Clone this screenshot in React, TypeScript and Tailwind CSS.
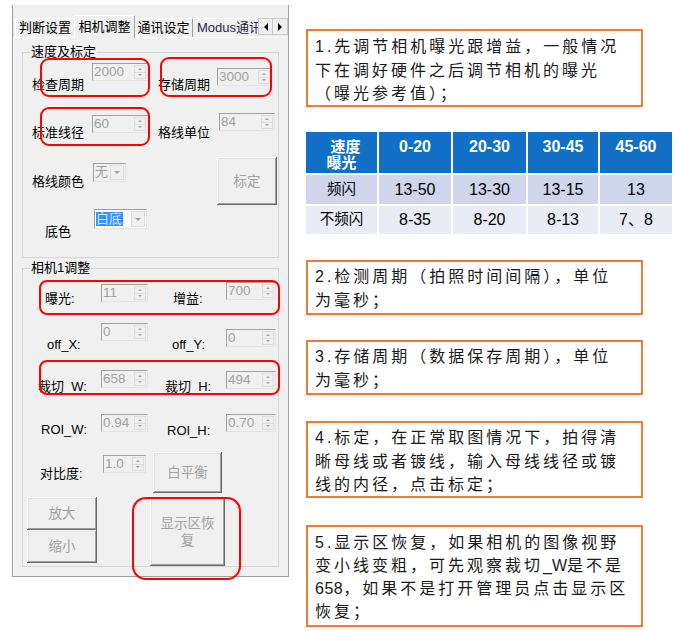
import React from "react";

const UI = "font-['Liberation_Sans','Noto_Sans_CJK_SC',sans-serif]";

const Tri = ({ up }: { up?: boolean }) =>
  up ? (
    <div className="h-0 w-0 border-x-[2px] border-b-[2px] border-x-transparent border-b-[#a0a0a0]" />
  ) : (
    <div className="h-0 w-0 border-x-[2px] border-t-[2px] border-x-transparent border-t-[#a0a0a0]" />
  );

const Spin = ({ v, c }: { v: string; c: string }) => (
  <div
    className={`flex h-[18px] shrink-0 border border-b-[#e3e3e3] border-l-[#a0a0a0] border-r-[#e3e3e3] border-t-[#a0a0a0] bg-[#f0f0f0] ${c}`}
  >
    <div className="flex-1 pl-[1px] text-[13.5px] leading-[16px] text-[#a0a0a0]">{v}</div>
    <div className="my-[1px] mr-[1px] flex w-[12px] flex-col">
      <div className="flex flex-1 items-center justify-center border border-[#dcdcdc]">
        <Tri up />
      </div>
      <div className="flex flex-1 items-center justify-center border border-t-0 border-[#dcdcdc]">
        <Tri />
      </div>
    </div>
  </div>
);

const Lbl = ({ t, c }: { t: string; c: string }) => (
  <div className={`shrink-0 whitespace-nowrap text-[13px] leading-[17px] text-black ${c}`}>{t}</div>
);

const Btn = ({ children, c }: { children: React.ReactNode; c: string }) => (
  <div
    className={`flex shrink-0 items-center justify-center bg-[#f0f0f0] text-center text-[13.5px] leading-[17px] text-[#a0a0a0] shadow-[inset_-1px_-1px_0_#696969,inset_1px_1px_0_#ffffff,inset_-2px_-2px_0_#a0a0a0,inset_2px_2px_0_#e3e3e3] ${c}`}
  >
    {children}
  </div>
);

const Note = ({ lines, c }: { lines: React.ReactNode[]; c: string }) => (
  <div
    className={`w-[337px] shrink-0 border-2 border-[#ed7d31] pl-[7px] text-[16px] leading-[23.5px] tracking-[3px] text-[#1a1a1a] ${c}`}
  >
    {lines.map((l, i) => (
      <div key={i} className="whitespace-nowrap">
        {l}
      </div>
    ))}
  </div>
);

const Red = ({ c }: { c: string }) => (
  <div className={`pointer-events-none absolute border-2 border-[#ff0000] ${c}`} />
);

export default function App() {
  return (
    <div className={`relative flex h-[631px] w-[676px] bg-white ${UI}`}>
      {/* left: dialog */}
      <div className="ml-[12px] mt-[5px] flex h-[572px] w-[277px] shrink-0 flex-col border-b border-l border-r border-dotted border-b-[#a0a0a0] border-l-[#9a9a9a] border-r-[#a0a0a0] border-solid bg-[#f0f0f0]">
        {/* tab strip */}
        <div className="flex h-[32px] items-end pl-[2px]">
          <div className="flex h-[19px] w-[59px] items-center justify-center border-l border-t border-l-white border-t-white text-[13px] text-black">
            判断设置
          </div>
          <div className="relative z-10 -mb-[1px] flex h-[23px] w-[61px] items-start justify-center border-l border-r border-t border-l-white border-r-[#a0a0a0] border-t-white bg-[#f0f0f0] pt-[1px] text-[13px] text-black">
            相机调整
          </div>
          <div className="flex h-[19px] w-[58px] items-center justify-center border-r border-t border-r-[#a0a0a0] border-t-white text-[13px] text-black">
            通讯设定
          </div>
          <div className="flex h-[19px] w-[65px] items-center overflow-hidden whitespace-nowrap border-t border-t-white pl-[4px] text-[13px] text-[#2b2450]">
            Modus通讯
          </div>
          <div className="mb-[2px] flex h-[17px]">
            <div className="flex w-[15px] items-center justify-center border border-[#c8c8c8] bg-[#f0f0f0]">
              <div className="h-0 w-0 border-y-[4px] border-r-[4px] border-y-transparent border-r-black" />
            </div>
            <div className="flex w-[15px] items-center justify-center border border-l-0 border-[#c8c8c8] bg-[#f0f0f0]">
              <div className="h-0 w-0 border-y-[4px] border-l-[4px] border-y-transparent border-l-black" />
            </div>
          </div>
        </div>

        {/* tab panel */}
        <div className="flex flex-1 flex-col border-l border-t border-l-white border-t-white pl-[8px] pt-[6px]">
          {/* group 1 */}
          <fieldset className="w-[257px] border border-[#d5d5d5]">
            <legend className="ml-[7px] px-[1px] text-[13px] leading-[16px] text-black">速度及标定</legend>
            <div className="flex h-[50px] items-start">
              <Lbl t="检查周期" c="ml-[9px] mt-[16px] w-[60px]" />
              <Spin v="2000" c="mt-[3px] w-[56px]" />
              <Lbl t="存储周期" c="ml-[10px] mt-[16px] w-[59px]" />
              <Spin v="3000" c="mt-[8px] w-[55px]" />
            </div>
            <div className="flex h-[47px] items-start">
              <Lbl t="标准线径" c="ml-[9px] mt-[14px] w-[60px]" />
              <Spin v="60" c="mt-[5px] w-[56px]" />
              <Lbl t="格线单位" c="ml-[10px] mt-[14px] w-[61px]" />
              <Spin v="84" c="mt-[3px] w-[56px]" />
            </div>
            <div className="flex h-[48px] items-start">
              <Lbl t="格线颜色" c="ml-[9px] mt-[16px] w-[61px]" />
              <div className="mt-[6px] flex h-[19px] w-[33px] shrink-0 border border-b-[#e3e3e3] border-l-[#a0a0a0] border-r-[#e3e3e3] border-t-[#a0a0a0]">
                <div className="flex-1 pl-[1px] text-[13px] leading-[16px] text-[#a0a0a0]">无</div>
                <div className="my-[1px] mr-[1px] flex w-[14px] items-center justify-center border border-[#dcdcdc]">
                  <div className="h-0 w-0 border-x-[3px] border-t-[3px] border-x-transparent border-t-[#a0a0a0]" />
                </div>
              </div>
              <Btn c="ml-[91px] h-[48px] w-[60px]">标定</Btn>
            </div>
            <div className="flex h-[52px] items-start">
              <Lbl t="底色" c="ml-[22px] mt-[18px] w-[49px]" />
              <div className="mt-[4px] flex h-[20px] w-[53px] shrink-0 border border-b-[#e3e3e3] border-l-[#a0a0a0] border-r-[#e3e3e3] border-t-[#a0a0a0] bg-white">
                <div className="flex-1 pl-[1px] pt-[2px]">
                  <span className="block h-[14px] w-[27px] bg-[#3390ff] text-[13px] leading-[14px] text-[#d8e8ff]">白底</span>
                </div>
                <div className="my-[1px] mr-[1px] flex w-[14px] items-center justify-center border border-[#dcdcdc] bg-[#f0f0f0]">
                  <div className="h-0 w-0 border-x-[3px] border-t-[3px] border-x-transparent border-t-[#a0a0a0]" />
                </div>
              </div>
            </div>
          </fieldset>

          {/* group 2 */}
          <fieldset className="mt-[2px] w-[257px] border border-[#d5d5d5]">
            <legend className="ml-[7px] px-[1px] text-[13px] leading-[16px] text-black">相机1调整</legend>
            <div className="flex h-[38px] items-start">
              <Lbl t="曝光:" c="ml-[22px] mt-[14px] w-[56px]" />
              <Spin v="11" c="mt-[8px] w-[47px]" />
              <Lbl t="增益:" c="ml-[25px] mt-[14px] w-[53px]" />
              <Spin v="700" c="mt-[6px] w-[50px]" />
            </div>
            <div className="flex h-[43px] items-start">
              <Lbl t="off_X:" c="ml-[24px] mt-[22px] w-[54px]" />
              <Spin v="0" c="mt-[9px] w-[47px]" />
              <Lbl t="off_Y:" c="ml-[24px] mt-[22px] w-[54px]" />
              <Spin v="0" c="mt-[15px] w-[50px]" />
            </div>
            <div className="flex h-[42px] items-start">
              <Lbl t="裁切_W:" c="ml-[15px] mt-[21px] w-[63px]" />
              <Spin v="658" c="mt-[13px] w-[47px]" />
              <Lbl t="裁切_H:" c="ml-[17px] mt-[21px] w-[61px]" />
              <Spin v="494" c="mt-[14px] w-[50px]" />
            </div>
            <div className="flex h-[45px] items-start">
              <Lbl t="ROI_W:" c="ml-[18px] mt-[22px] w-[60px]" />
              <Spin v="0.94" c="mt-[15px] w-[47px]" />
              <Lbl t="ROI_H:" c="ml-[19px] mt-[23px] w-[59px]" />
              <Spin v="0.70" c="mt-[15px] w-[50px]" />
            </div>
            <div className="flex h-[51px] items-start">
              <Lbl t="对比度:" c="ml-[17px] mt-[21px] w-[63px]" />
              <Spin v="1.0" c="mt-[11px] w-[43px]" />
              <Btn c="ml-[7px] mt-[8px] h-[41px] w-[69px]">白平衡</Btn>
            </div>
            <div className="flex h-[71px] items-start">
              <div className="ml-[4px] mt-[2px] flex flex-col">
                <Btn c="h-[33px] w-[70px]">放大</Btn>
                <Btn c="h-[33px] w-[70px]">缩小</Btn>
              </div>
              <Btn c="ml-[53px] mt-[2px] h-[69px] w-[75px]">
                <span>
                  显示区恢
                  <br />
                  复
                </span>
              </Btn>
            </div>
          </fieldset>
        </div>
      </div>

      {/* right: notes */}
      <div className="ml-[17px] flex w-[366px] flex-col">
        <Note
          c="mt-[29px] h-[78px] pt-[4px]"
          lines={["1.先调节相机曝光跟增益，一般情况", "下在调好硬件之后调节相机的曝光", "（曝光参考值）；"]}
        />

        <div className="mt-[25px] grid grid-cols-[71px_72px_73px_70px_72px] grid-rows-[41px_29px_28px] gap-[2px] bg-white">
          <div className="flex flex-col items-center bg-[#1170c6] pt-[7px] text-[15px] font-bold leading-[16px] text-white">
            <span className="pl-[8px]">速度</span>
            <span>曝光</span>
          </div>
          {["0-20", "20-30", "30-45", "45-60"].map((t) => (
            <div key={t} className="flex justify-center bg-[#1170c6] pt-[7px] text-[16px] font-bold leading-[16px] text-white">
              {t}
            </div>
          ))}
          <div className="flex items-center justify-center bg-[#cfd5ea] text-[14.5px] text-black">频闪</div>
          {["13-50", "13-30", "13-15", "13"].map((t, i) => (
            <div key={i} className="flex items-center justify-center bg-[#cfd5ea] text-[16px] text-black">
              {t}
            </div>
          ))}
          <div className="flex items-center justify-center bg-[#e9ebf5] text-[14.5px] text-black">不频闪</div>
          {["8-35", "8-20", "8-13", "7、8"].map((t, i) => (
            <div key={i} className="flex items-center justify-center bg-[#e9ebf5] text-[16px] text-black">
              {t}
            </div>
          ))}
        </div>

        <Note c="mt-[26px] h-[55px] pt-[3px]" lines={["2.检测周期（拍照时间间隔），单位", "为毫秒；"]} />
        <Note c="mt-[25px] h-[55px] pt-[3px]" lines={["3.存储周期（数据保存周期），单位", "为毫秒；"]} />
        <Note
          c="mt-[26px] h-[77px] pt-[3px]"
          lines={["4.标定，在正常取图情况下，拍得清", "晰母线或者镀线，输入母线线径或镀", "线的内径，点击标定；"]}
        />
        <Note
          c="mt-[27px] h-[102px] pt-[4px] leading-[23px]"
          lines={[
            "5.显示区恢复，如果相机的图像视野",
            <>
              变小线变粗，可先观察裁切<span className="tracking-[0px]">_W</span>是不是
            </>,
            <>
              <span className="tracking-[0.5px]">658</span>，如果不是打开管理员点击显示区
            </>,
            "恢复；",
          ]}
        />
      </div>

      {/* red annotation outlines */}
      <Red c="left-[40px] top-[58px] h-[39px] w-[110px] rounded-[9px]" />
      <Red c="left-[160px] top-[57px] h-[40px] w-[112px] rounded-[9px]" />
      <Red c="left-[40px] top-[107px] h-[39px] w-[110px] rounded-[9px]" />
      <Red c="left-[39px] top-[280px] h-[35px] w-[241px] rounded-[8px]" />
      <Red c="left-[39px] top-[360px] h-[35px] w-[241px] rounded-[8px]" />
      <Red c="left-[132px] top-[497px] h-[83px] w-[109px] rounded-[14px]" />
    </div>
  );
}
